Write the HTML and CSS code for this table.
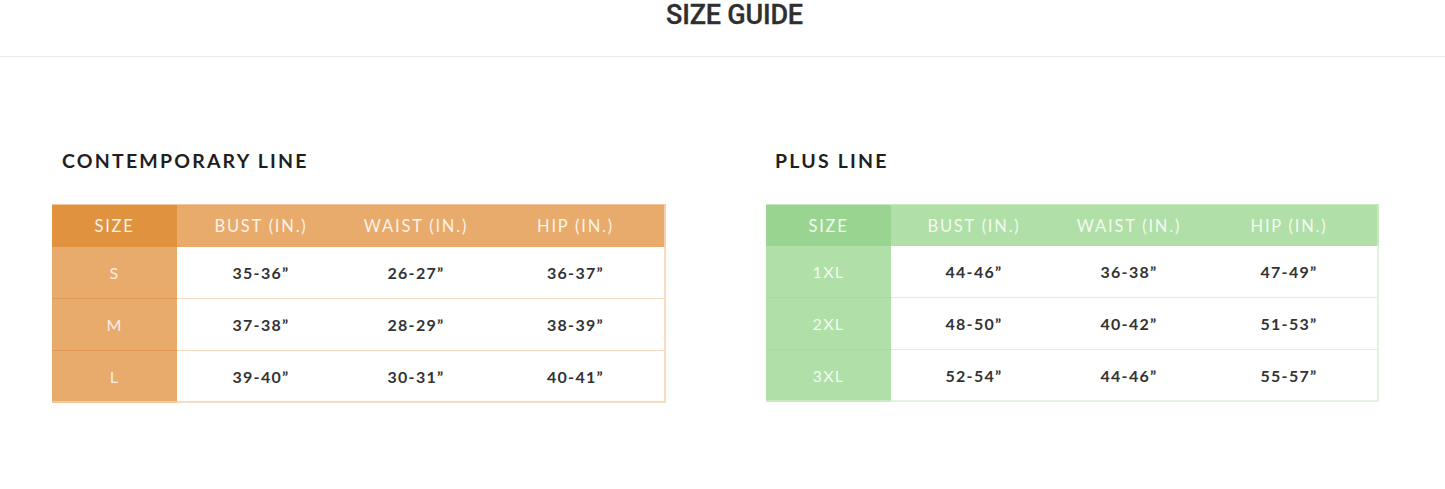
FILE: index.html
```html
<!DOCTYPE html>
<html lang="en">
<head>
<meta charset="utf-8">
<title>Size Guide</title>
<link rel="stylesheet" href="styles.css">
</head>
<body>
<header class="top">
  <h1 class="title">SIZE GUIDE</h1>
</header>
<main class="charts">
  <section class="chart orange">
    <h2 class="chart-title">CONTEMPORARY LINE</h2>
    <div class="table">
      <div class="cell head first">SIZE</div>
      <div class="cell head">BUST (IN.)</div>
      <div class="cell head">WAIST (IN.)</div>
      <div class="cell head">HIP (IN.)</div>

      <div class="cell size">S</div>
      <div class="cell val">35-36”</div>
      <div class="cell val">26-27”</div>
      <div class="cell val">36-37”</div>

      <div class="cell size">M</div>
      <div class="cell val">37-38”</div>
      <div class="cell val">28-29”</div>
      <div class="cell val">38-39”</div>

      <div class="cell size last">L</div>
      <div class="cell val last">39-40”</div>
      <div class="cell val last">30-31”</div>
      <div class="cell val last">40-41”</div>
    </div>
  </section>
  <section class="chart green">
    <h2 class="chart-title">PLUS LINE</h2>
    <div class="table">
      <div class="cell head first">SIZE</div>
      <div class="cell head">BUST (IN.)</div>
      <div class="cell head">WAIST (IN.)</div>
      <div class="cell head">HIP (IN.)</div>

      <div class="cell size">1XL</div>
      <div class="cell val">44-46”</div>
      <div class="cell val">36-38”</div>
      <div class="cell val">47-49”</div>

      <div class="cell size">2XL</div>
      <div class="cell val">48-50”</div>
      <div class="cell val">40-42”</div>
      <div class="cell val">51-53”</div>

      <div class="cell size last">3XL</div>
      <div class="cell val last">52-54”</div>
      <div class="cell val last">44-46”</div>
      <div class="cell val last">55-57”</div>
    </div>
  </section>
</main>
</body>
</html>
```

FILE: styles.css
```css
* { box-sizing: border-box; }

body {
  margin: 0;
  background: #ffffff;
  font-family: "Lato", "Open Sans", sans-serif;
  color: #2b2b2b;
}

.top {
  height: 57px;
  border-bottom: 1px solid #ebebeb;
  display: flex;
  justify-content: center;
}

.title {
  margin: 0 0 0 24px;
  font-family: "Roboto", "DejaVu Sans", sans-serif;
  font-weight: 500;
  font-size: 27px;
  line-height: 31px;
  color: #2f2f2f;
  letter-spacing: -0.2px;
  -webkit-text-stroke: 0.3px #2f2f2f;
}

.charts {
  display: flex;
  gap: 100px;
  padding: 0 0 0 52px;
  margin-top: 92px;
}

.chart {
  width: 613px;
}

.orange { width: 614px; }

.chart-title {
  margin: 0 0 31px 10px;
  font-family: "Lato", sans-serif;
  font-weight: 700;
  font-size: 19.5px;
  line-height: 24px;
  letter-spacing: 2.2px;
  color: #1f1f1f;
}

.green .chart-title { margin-left: 9px; }

.table {
  display: grid;
  grid-template-columns: 125px 168px 142px 1fr;
  grid-template-rows: 43px 52px 52px 52px;
}

.cell {
  display: flex;
  align-items: center;
  justify-content: center;
  font-size: 16px;
  letter-spacing: 1.3px;
}

.head {
  color: #fdf3e8;
  font-weight: 400;
  font-size: 16.5px;
  letter-spacing: 1.8px;
}

.val {
  background: #ffffff;
  font-weight: 700;
  color: #333333;
}

.size {
  color: #fbefe2;
  font-weight: 400;
}

/* orange theme */
.orange .head { background: #e8ab6c; border-top: 1px solid #f0c8a0; }
.orange .head.first { background: #e0923f; }
.orange .size { background: #e8ab6c; border-bottom: 1px solid #e09a55; }
.orange .val { border-bottom: 1px solid #f7dcc0; }
.orange .cell:nth-child(4n) { border-right: 2px solid #f7dcc0; }
.orange .head:nth-child(4n) { border-right: 2px solid #f3d1ad; }
.orange .last { border-bottom: 2px solid #f7dcc0; }
.orange .size.last { border-bottom: 2px solid #f0c9a2; }

/* green theme */
.green .table {
  margin-top: 1px;
  grid-template-columns: 125px 166px 144px 1fr;
  grid-template-rows: 42px 52px 52px 52px;
}
.green .head { background: #b0dfa8; color: #f3fbf1; border-top: 1px solid #c8eac1; }
.green .head.first { background: #99d590; }
.green .size { background: #b0dfa8; color: #f3fbf1; border-bottom: 1px solid #a6db9d; }
.green .val { border-bottom: 1px solid #dcf1d8; }
.green .cell:nth-child(4n) { border-right: 2px solid #e2f3de; }
.green .head:nth-child(4n) { border-right: 2px solid #c8eac1; }
.green .last { border-bottom: 2px solid #e2f3de; }
.green .size.last { border-bottom: 2px solid #c8eac1; }
```
